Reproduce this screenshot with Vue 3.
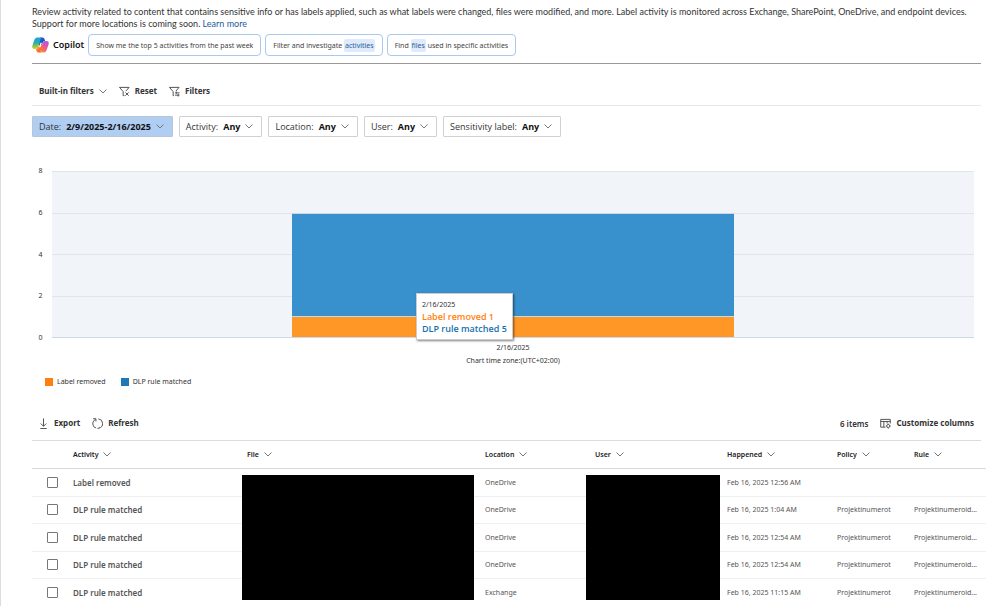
<script setup>
import { ref } from 'vue'

const filters = [
  { label: 'Date:', value: '2/9/2025-2/16/2025', active: true },
  { label: 'Activity:', value: 'Any' },
  { label: 'Location:', value: 'Any' },
  { label: 'User:', value: 'Any' },
  { label: 'Sensitivity label:', value: 'Any' },
]

const axisMax = 8
const ticks = [8, 6, 4, 2, 0]
const series = [
  { name: 'DLP rule matched', count: 5, cls: 'matched' },
  { name: 'Label removed', count: 1, cls: 'removed' },
]
const barHeight = (n) => ({ height: (n / axisMax) * 100 + '%' })

const columns = [
  { name: 'Activity', cls: 'c-activity' },
  { name: 'File', cls: 'c-file' },
  { name: 'Location', cls: 'c-location' },
  { name: 'User', cls: 'c-user' },
  { name: 'Happened', cls: 'c-happened' },
  { name: 'Policy', cls: 'c-policy' },
  { name: 'Rule', cls: 'c-rule' },
]

const rows = ref([
  { activity: 'Label removed', location: 'OneDrive', happened: 'Feb 16, 2025 12:56 AM', policy: '', rule: '', checked: false },
  { activity: 'DLP rule matched', location: 'OneDrive', happened: 'Feb 16, 2025 1:04 AM', policy: 'Projektinumerot', rule: 'Projektinumeroid...', checked: false },
  { activity: 'DLP rule matched', location: 'OneDrive', happened: 'Feb 16, 2025 12:54 AM', policy: 'Projektinumerot', rule: 'Projektinumeroid...', checked: false },
  { activity: 'DLP rule matched', location: 'OneDrive', happened: 'Feb 16, 2025 12:54 AM', policy: 'Projektinumerot', rule: 'Projektinumeroid...', checked: false },
  { activity: 'DLP rule matched', location: 'Exchange', happened: 'Feb 16, 2025 11:15 AM', policy: 'Projektinumerot', rule: 'Projektinumeroid...', checked: false },
])
</script>

<template>
  <main class="page">
    <p class="intro">
      Review activity related to content that contains sensitive info or has labels applied, such as what labels were changed, files were modified, and more. Label activity is monitored across Exchange, SharePoint, OneDrive, and endpoint devices.<br />
      Support for more locations is coming soon. <a href="#">Learn more</a>
    </p>

    <section class="copilot">
      <svg class="logo" viewBox="0 0 34 32" aria-hidden="true">
        <defs>
          <linearGradient id="cpA" x1="0.3" y1="0" x2="0.4" y2="1">
            <stop offset="0" stop-color="#1c9fe6" />
            <stop offset="0.45" stop-color="#25aeb0" />
            <stop offset="0.75" stop-color="#8cc648" />
            <stop offset="1" stop-color="#f4cc22" />
          </linearGradient>
          <linearGradient id="cpB" x1="0.8" y1="0" x2="0.3" y2="1">
            <stop offset="0" stop-color="#a55cf0" />
            <stop offset="0.45" stop-color="#ea559b" />
            <stop offset="0.8" stop-color="#fb7048" />
            <stop offset="1" stop-color="#ffa34a" />
          </linearGradient>
          <linearGradient id="cpC" x1="0" y1="0" x2="1" y2="1">
            <stop offset="0" stop-color="#1b6fe0" />
            <stop offset="1" stop-color="#1b40a8" />
          </linearGradient>
          <linearGradient id="cpD" x1="1" y1="1" x2="0" y2="0">
            <stop offset="0" stop-color="#f0503a" />
            <stop offset="1" stop-color="#ffa02c" />
          </linearGradient>
        </defs>
        <path d="M16 1 H21 C23.500 1 24.700 2.500 25.300 5 L26.200 8.200 C23 8.200 22 10 21.200 12.500 L20 16 H13 Z" fill="url(#cpC)" />
        <path d="M18 31 H13 C10.500 31 9.300 29.500 8.700 27 L7.800 23.800 C11 23.800 12 22 12.800 19.500 L14 16 H21 Z" fill="url(#cpD)" />
        <path d="M20.500 1 H10.500 C7 1 5.300 4 4 8 C2.500 13 .5 16.500 .5 19.500 C.5 22.500 2 24 5 24 H8 C10.500 24 11.700 22.500 12.500 20 L16.500 6.500 C17.300 3.500 18 1 20.500 1 Z" fill="url(#cpA)" />
        <path d="M13.500 31 H23.500 C27 31 28.700 28 30 24 C31.500 19 33.500 15.500 33.500 12.500 C33.500 9.500 32 8 29 8 H26 C23.500 8 22.300 9.500 21.500 12 L17.500 25.500 C16.700 28.500 16 31 13.500 31 Z" fill="url(#cpB)" />
        <path d="M17 11.500 H19.800 L17 20.500 H14.200 Z" fill="#fff" />
      </svg>
      <strong class="brand">Copilot</strong>
      <button class="chip" type="button">Show me the top 5 activities from the past week</button>
      <button class="chip" type="button">Filter and investigate <mark>activities</mark></button>
      <button class="chip" type="button">Find <mark>files</mark> used in specific activities</button>
    </section>

    <div class="toolbar">
      <button class="cmd" type="button">
        Built-in filters
        <svg class="chev" viewBox="0 0 8 5" aria-hidden="true"><path d="M.5 .5 L4 4 L7.500 .5" /></svg>
      </button>
      <button class="cmd" type="button">
        <svg class="ico" viewBox="0 0 12 12" aria-hidden="true">
          <path d="M.5 1.500 H11 L7.500 5.500 M.5 1.500 L4.500 6 V10.500 H6 M7 7 L10.500 10.500 M10.500 7 L7 10.500" />
        </svg>
        Reset
      </button>
      <button class="cmd" type="button">
        <svg class="ico" viewBox="0 0 12 12" aria-hidden="true">
          <path d="M.5 1.500 H11 L7.500 5.500 M.5 1.500 L4.500 6 V10.500 H5.500 M6.500 7.500 H11.500 M6.500 10 H11.500 M8 6 V8.500 M10 8.500 V11.500" />
        </svg>
        Filters
      </button>
    </div>

    <div class="filters">
      <button v-for="f in filters" :key="f.label" type="button" class="pill" :class="{ active: f.active }">
        <span>{{ f.label }}</span>
        <b>{{ f.value }}</b>
        <svg class="chev" viewBox="0 0 8 5" aria-hidden="true"><path d="M.5 .5 L4 4 L7.500 .5" /></svg>
      </button>
    </div>

    <figure class="chart">
      <div class="axis">
        <span v-for="t in ticks" :key="t">{{ t }}</span>
      </div>
      <div class="plot">
        <div class="bands"><i v-for="n in 4" :key="n"></i></div>
        <div class="bar">
          <div v-for="s in series" :key="s.name" :class="s.cls" :style="barHeight(s.count)"></div>
        </div>
        <div class="tip" role="tooltip">
          <span>2/16/2025</span>
          <b class="t-removed">Label removed 1</b>
          <b class="t-matched">DLP rule matched 5</b>
        </div>
      </div>
      <figcaption class="caption">
        <span>2/16/2025</span>
        <span>Chart time zone:(UTC+02:00)</span>
      </figcaption>
    </figure>

    <ul class="legend">
      <li><i class="sw-removed"></i>Label removed</li>
      <li><i class="sw-matched"></i>DLP rule matched</li>
    </ul>

    <div class="commands">
      <button class="cmd" type="button">
        <svg class="ico" viewBox="0 0 12 12" aria-hidden="true">
          <path d="M6 .5 V9 M3 6 L6 9 L9 6 M2.500 11.500 H9.500" />
        </svg>
        Export
      </button>
      <button class="cmd" type="button">
        <svg class="ico" viewBox="0 0 12 12" aria-hidden="true">
          <path d="M4 1.500 A5 5 0 0 0 4.500 11 M7 1 A5 5 0 0 1 7.500 10.900 M1.200 .8 H4.300 V3.800 M6 11.200 H8" />
        </svg>
        Refresh
      </button>
      <span class="count">6 items</span>
      <button class="cmd" type="button">
        <svg class="ico" viewBox="0 0 12 12" aria-hidden="true">
          <path d="M6 10 H.8 V1.500 H11.200 V6 M.8 3.800 H11.200 M4.200 3.800 V10 M7.700 3.800 V6" />
          <circle cx="9" cy="8.800" r="1.700" />
          <path d="M9 6.200 V7 M9 10.600 V11.500 M6.500 8.800 H7.300 M10.700 8.800 H11.600" />
        </svg>
        Customize columns
      </button>
    </div>

    <table class="grid">
      <colgroup>
        <col class="c-check" />
        <col v-for="c in columns" :key="c.name" :class="c.cls" />
      </colgroup>
      <thead>
        <tr>
          <td></td>
          <th v-for="c in columns" :key="c.name" scope="col" :class="c.cls">
            {{ c.name }}
            <svg class="chev" viewBox="0 0 8 5" aria-hidden="true"><path d="M.5 .5 L4 4 L7.500 .5" /></svg>
          </th>
        </tr>
      </thead>
      <tbody>
        <tr v-for="(r, i) in rows" :key="i">
          <td class="check">
            <input :id="'row' + i" v-model="r.checked" type="checkbox" />
          </td>
          <td class="activity"><label :for="'row' + i">{{ r.activity }}</label></td>
          <td v-if="i === 0" class="hidden-cell" :rowspan="rows.length"><div></div></td>
          <td class="c-location">{{ r.location }}</td>
          <td v-if="i === 0" class="hidden-cell" :rowspan="rows.length"><div></div></td>
          <td class="c-happened">{{ r.happened }}</td>
          <td>{{ r.policy }}</td>
          <td>{{ r.rule }}</td>
        </tr>
      </tbody>
    </table>
  </main>
</template>

<style>
body {
  margin: 0;
  background: #fff;
}
</style>

<style scoped>
.page {
  box-sizing: border-box;
  min-height: 100vh;
  padding: 6px 19px 0 31px;
  border-left: 1px solid #dcdcdc;
  font-family: "Noto Sans", "Open Sans", sans-serif;
  font-size: 7px;
  color: #333;
}
button {
  font: inherit;
  color: inherit;
  background: none;
  border: 0;
  padding: 0;
  margin: 0;
  white-space: nowrap;
}
svg path,
svg circle {
  vector-effect: non-scaling-stroke;
}
.intro {
  margin: 0;
  font-family: Lato, "Open Sans", sans-serif;
  font-size: 9px;
  line-height: 12px;
}
.intro a {
  color: #245a9c;
  text-decoration: none;
}
.copilot {
  display: flex;
  align-items: flex-start;
  gap: 4px;
  height: 33px;
  border-bottom: 1px solid #999;
}
.logo {
  width: 17px;
  height: 16px;
  margin-top: 7px;
}
.brand {
  margin-top: 9px;
  font-size: 9px;
  line-height: 12px;
  font-weight: 600;
  color: #111;
}
.chip {
  height: 22px;
  margin-top: 4px;
  padding: 0 7px;
  border: 1px solid #a9c9ef;
  border-radius: 4px;
  color: #444;
}
.chip mark {
  padding: 2px 1px;
  border-radius: 2px;
  background: #dfebfa;
  color: #2a5b98;
}
.toolbar {
  display: flex;
  align-items: center;
  gap: 12px;
  height: 42px;
  padding: 13px 0 0 7px;
  box-sizing: border-box;
  border-bottom: 1px solid #e8e8e8;
}
.cmd {
  display: flex;
  align-items: center;
  gap: 5px;
  font-size: 8px;
  font-weight: 700;
  line-height: 12px;
  color: #333;
}
.ico {
  width: 11px;
  height: 11px;
  fill: none;
  stroke: #555;
  stroke-width: 1;
}
.chev {
  width: 8px;
  height: 5px;
  fill: none;
  stroke: #777;
  stroke-width: 1;
}
.filters {
  display: flex;
  gap: 6px;
  margin-top: 10px;
}
.pill {
  display: flex;
  align-items: center;
  gap: 5px;
  height: 21px;
  padding: 0 8px 0 6px;
  border: 1px solid #d0d0d0;
  border-radius: 1px;
  font-family: "Open Sans", "Noto Sans", sans-serif;
  font-size: 9px;
}
.pill b {
  font-weight: 700;
  color: #111;
}
.pill.active {
  background: #b0cdf2;
  border-color: #b9c6d6;
}
.chart {
  display: grid;
  grid-template-columns: 20px 1fr;
  margin: 34px 7px 0 0;
}
.axis {
  display: flex;
  flex-direction: column;
  justify-content: space-between;
  align-items: center;
  margin: -5px 3px -5px 0;
  line-height: 10px;
}
.plot {
  display: grid;
  position: relative;
  height: 167px;
  background: #f1f5fa;
}
.bands,
.bar {
  grid-area: 1 / 1;
}
.bands {
  display: flex;
  flex-direction: column;
  border-bottom: 1px solid #cfd8ea;
}
.bands i {
  flex: 1;
  border-top: 1px solid #e1e5ea;
}
.bar {
  display: flex;
  flex-direction: column;
  justify-content: flex-end;
  width: 48%;
  margin: 0 auto;
  padding-bottom: 1px;
}
.bar div {
  box-sizing: border-box;
  border-top: 1px solid #c9d8e6;
}
.bar .matched {
  background: #3890cd;
}
.bar .removed {
  background: #ff9726;
}
.tip {
  position: absolute;
  left: 364px;
  top: 122px;
  display: flex;
  flex-direction: column;
  padding: 5px 5px 4px;
  border: 1px solid #ccc;
  background: #fff;
  box-shadow: 1px 1px 2px rgba(0, 0, 0, 0.5);
  line-height: 12px;
  white-space: nowrap;
}
.tip b {
  font-family: "Open Sans", "Noto Sans", sans-serif;
  font-size: 9px;
  font-weight: 600;
}
.t-removed {
  color: #ff7f0e;
}
.t-matched {
  color: #1570ae;
}
.caption {
  grid-column: 2;
  display: flex;
  flex-direction: column;
  align-items: center;
  padding-top: 3px;
  line-height: 13px;
}
.legend {
  display: flex;
  gap: 15px;
  margin: 9px 0 0;
  padding: 0 0 0 13px;
  list-style: none;
  line-height: 12px;
}
.legend li {
  display: flex;
  align-items: center;
  gap: 4px;
}
.legend i {
  width: 8px;
  height: 8px;
}
.sw-removed {
  background: #ff7f0e;
}
.sw-matched {
  background: #1f77b4;
}
.commands {
  display: flex;
  align-items: center;
  gap: 12px;
  margin-top: 29px;
  padding: 0 7px 11px 6px;
  border-bottom: 1px solid #dcdcdc;
}
.count {
  margin-left: auto;
  font-size: 8px;
  font-weight: 600;
}
.grid {
  width: calc(100% + 5px);
  table-layout: fixed;
  border-spacing: 0;
  color: #555;
}
.grid td,
.grid th {
  box-sizing: border-box;
  height: 28px;
  padding: 0 0 0 5px;
  border-bottom: 1px solid #f0f0f0;
  text-align: left;
  white-space: nowrap;
}
.grid tbody td {
  padding-bottom: 1px;
}
.grid tbody tr:nth-child(even) td {
  height: 27px;
}
.grid thead td,
.grid thead th {
  border-bottom-color: #dadada;
}
.grid th {
  font-weight: 600;
  color: #222;
}
.grid th .chev {
  margin-left: 3px;
  vertical-align: 0;
}
col.c-check {
  width: 36px;
}
col.c-activity {
  width: 174px;
}
col.c-location {
  width: 112px;
}
col.c-user {
  width: 134px;
}
col.c-happened {
  width: 112px;
}
col.c-policy {
  width: 77px;
}
col.c-rule {
  width: 77px;
}
.grid th.c-location,
.grid td.c-location {
  padding-left: 11px;
}
.grid th.c-user {
  padding-left: 9px;
}
.grid th.c-happened,
.grid td.c-happened {
  padding-left: 7px;
}
.grid td.check {
  padding-left: 15px;
}
.check input {
  appearance: none;
  display: block;
  box-sizing: border-box;
  width: 11px;
  height: 11px;
  margin: 0;
  border: 1px solid #777;
  border-radius: 1px;
  background: #fff;
}
.check input:checked {
  background: #2a6fc0;
}
.activity {
  font-size: 8px;
  font-weight: 600;
}
.grid td.hidden-cell {
  padding: 0;
}
.hidden-cell div {
  height: 125px;
  background: #000;
}
</style>
